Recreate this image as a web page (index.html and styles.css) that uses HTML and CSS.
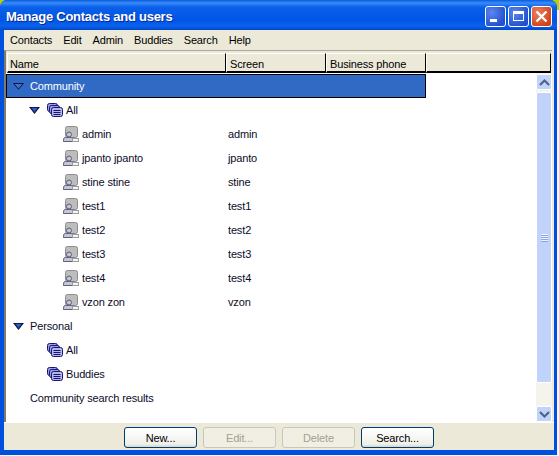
FILE: index.html
```html
<!DOCTYPE html>
<html lang="en">
<head>
<meta charset="UTF-8">
<title>Manage Contacts and users</title>
<link rel="stylesheet" href="styles.css">
</head>
<body>
<svg class="defs" width="0" height="0">
    <symbol id="i-user" viewBox="0 0 16 16">
        <rect x="2.5" y="0.5" width="12" height="11" rx="2" fill="#bdbdbd" stroke="#8c8c8c"/>
        <circle cx="6" cy="8.5" r="2.5" fill="#c6c6cc" stroke="#5a5f85"/>
        <path d="M0.5 15.5v-2q0-2 2-2h6q1.500 0 1.500 1.500v2.500z" fill="#c6c6cc" stroke="#5a5f85"/>
        <rect x="9.500" y="12.500" width="6" height="3" fill="#f6f6f6" stroke="#9a9a9a"/>
    </symbol>
    <symbol id="i-group" viewBox="0 0 16 14">
        <rect x="0.500" y="0.500" width="10" height="8" rx="2" fill="#9a9de0" stroke="#14147a"/>
        <rect x="2.500" y="2.500" width="10" height="8" rx="2" fill="#9a9de0" stroke="#14147a"/>
        <rect x="4.500" y="4.500" width="11" height="9" rx="2" fill="#b4b6e6" stroke="#14147a"/>
        <path d="M6.500 7.500h7M6.500 9.500h7M6.500 11.500h7" stroke="#14147a" fill="none"/>
    </symbol>
    <symbol id="i-open" viewBox="0 0 11 7">
        <path d="M0.700 0.500h9.600L5.500 6.200z" fill="#3f72c8" stroke="#0c1440"/>
    </symbol>
    <symbol id="i-filled" viewBox="0 0 11 7">
        <path d="M0 0h11L5.500 7z" fill="#10184a"/>
        <path d="M2.500 1h6L5.500 5z" fill="#2f5dc0"/>
    </symbol>
</svg>

<div class="window">
    <div class="titlebar">
        <span class="title">Manage Contacts and users</span>
        <div class="caption-btns">
            <div class="cap-btn"><span class="cap-min"></span></div>
            <div class="cap-btn"><span class="cap-max"></span></div>
            <div class="cap-btn cap-close">
                <svg width="19" height="19" viewBox="0 0 19 19"><path d="M4.500 4.500l10 10M14.500 4.500l-10 10" stroke="#fff" stroke-width="2.400" fill="none"/></svg>
            </div>
        </div>
    </div>

    <div class="client">
        <div class="menubar">
            <span>Contacts</span>
            <span>Edit</span>
            <span>Admin</span>
            <span>Buddies</span>
            <span>Search</span>
            <span>Help</span>
        </div>

        <div class="panel">
            <div class="headers">
                <div class="col-head col-name">Name</div>
                <div class="col-head col-screen">Screen</div>
                <div class="col-head col-phone">Business phone</div>
                <div class="col-head col-rest"></div>
            </div>

            <div class="table-body">
                <div class="tree">
                    <div class="row level-0 selected">
                        <svg class="arrow" width="11" height="7"><use href="#i-open"/></svg>
                        <span>Community</span>
                    </div>
                    <div class="row level-1">
                        <svg class="arrow" width="11" height="7"><use href="#i-filled"/></svg>
                        <svg class="group-icon" width="16" height="14"><use href="#i-group"/></svg>
                        <span>All</span>
                    </div>
                    <div class="row user"><svg class="user-icon" width="16" height="16"><use href="#i-user"/></svg><span class="cell-name">admin</span><span>admin</span></div>
                    <div class="row user"><svg class="user-icon" width="16" height="16"><use href="#i-user"/></svg><span class="cell-name">jpanto jpanto</span><span>jpanto</span></div>
                    <div class="row user"><svg class="user-icon" width="16" height="16"><use href="#i-user"/></svg><span class="cell-name">stine stine</span><span>stine</span></div>
                    <div class="row user"><svg class="user-icon" width="16" height="16"><use href="#i-user"/></svg><span class="cell-name">test1</span><span>test1</span></div>
                    <div class="row user"><svg class="user-icon" width="16" height="16"><use href="#i-user"/></svg><span class="cell-name">test2</span><span>test2</span></div>
                    <div class="row user"><svg class="user-icon" width="16" height="16"><use href="#i-user"/></svg><span class="cell-name">test3</span><span>test3</span></div>
                    <div class="row user"><svg class="user-icon" width="16" height="16"><use href="#i-user"/></svg><span class="cell-name">test4</span><span>test4</span></div>
                    <div class="row user"><svg class="user-icon" width="16" height="16"><use href="#i-user"/></svg><span class="cell-name">vzon zon</span><span>vzon</span></div>
                    <div class="row level-0">
                        <svg class="arrow" width="11" height="7"><use href="#i-filled"/></svg>
                        <span>Personal</span>
                    </div>
                    <div class="row level-2">
                        <svg class="group-icon" width="16" height="14"><use href="#i-group"/></svg>
                        <span>All</span>
                    </div>
                    <div class="row level-2">
                        <svg class="group-icon" width="16" height="14"><use href="#i-group"/></svg>
                        <span>Buddies</span>
                    </div>
                    <div class="row no-arrow">Community search results</div>
                </div>

                <div class="scrollbar">
                    <div class="sb-btn">
                        <svg width="11" height="7" viewBox="0 0 11 7"><path d="M1 6l4.500-4.500L10 6" stroke="#4d6185" stroke-width="2" fill="none"/></svg>
                    </div>
                    <div class="sb-thumb"><span class="grip"></span></div>
                    <div class="sb-btn sb-down">
                        <svg width="11" height="7" viewBox="0 0 11 7"><path d="M1 1l4.500 4.500L10 1" stroke="#4d6185" stroke-width="2" fill="none"/></svg>
                    </div>
                </div>
            </div>
        </div>

        <div class="footer">
            <button class="btn">New...</button>
            <button class="btn" disabled>Edit...</button>
            <button class="btn" disabled>Delete</button>
            <button class="btn">Search...</button>
        </div>
    </div>
</div>
</body>
</html>
```
FILE: styles.css
```css
html, body {
    margin: 0;
    padding: 0;
    overflow: hidden;
}
body {
    width: 559px;
    height: 456px;
    background: linear-gradient(#b6d400 10px, #f4f4f4 10px);
    font-family: "Liberation Sans", Arial, sans-serif;
    font-size: 11px;
    letter-spacing: -0.15px;
    color: #000;
}
.defs {
    display: block;
}
.window {
    width: 557px;
    height: 455px;
    display: flex;
    flex-direction: column;
    background-color: #0050e0;
    border-radius: 7px 7px 0 0;
    overflow: hidden;
}
.titlebar {
    height: 30px;
    flex: none;
    display: flex;
    align-items: flex-start;
    justify-content: space-between;
    padding: 6px 5px 0 6px;
    box-sizing: border-box;
    background: linear-gradient(#0a5be0 0, #3a8cf8 3px, #0a60ea 7px, #0055e5 20px, #0a62ee 26px, #0048c8 30px);
}
.title {
    font-size: 13px;
    line-height: 22px;
    font-weight: bold;
    letter-spacing: -0.25px;
    color: #fff;
    text-shadow: 1px 1px 0 #0a2a90;
}
.caption-btns {
    display: flex;
    gap: 2px;
}
.cap-btn {
    width: 21px;
    height: 21px;
    box-sizing: border-box;
    border: 1px solid #fff;
    border-radius: 3px;
    background: radial-gradient(circle at 30% 30%, #5c86f0, #2350d0 75%);
    display: flex;
}
.cap-close {
    background: radial-gradient(circle at 30% 30%, #e8805c, #d2431c 75%);
}
.cap-min {
    width: 7px;
    height: 3px;
    background-color: #fff;
    margin: 12px 0 0 4px;
}
.cap-max {
    width: 11px;
    height: 10px;
    box-sizing: border-box;
    border: 1px solid #fff;
    border-top-width: 3px;
    margin: 4px 0 0 4px;
}
.client {
    flex: 1;
    min-height: 0;
    margin: 0 3px 5px 4px;
    display: flex;
    flex-direction: column;
    background-color: #ece9d8;
}
.menubar {
    height: 20px;
    flex: none;
    display: flex;
    align-items: center;
    gap: 11px;
    padding: 0 0 0 6px;
}
.panel {
    flex: none;
    height: 369px;
    margin-right: 2px;
    border-top: 1px solid #aca899;
    border-left: 2px solid #7e7b6e;
    padding-top: 2px;
    display: flex;
    flex-direction: column;
}
.headers {
    height: 20px;
    flex: none;
    display: flex;
    padding-left: 1px;
}
.col-head {
    box-sizing: border-box;
    height: 20px;
    padding: 3px 0 0 3px;
    border-right: 1px solid #000;
    border-bottom: 2px solid #000;
    border-left: 1px solid #fff;
    border-top: 1px solid #fff;
    background-color: #ece9d8;
    line-height: 15px;
}
.col-name { width: 219px; padding-left: 2px; }
.col-screen { width: 100px; }
.col-phone { width: 100px; }
.col-rest { width: 125px; }
.table-body {
    flex: 1;
    min-height: 0;
    display: flex;
    background-color: #fff;
}
.tree {
    width: 530px;
    flex: none;
    padding-top: 1px;
}
.row {
    height: 24px;
    display: flex;
    align-items: center;
    color: #0c0c2a;
}
.selected {
    width: 420px;
    box-sizing: border-box;
    background-color: #316ac5;
    border: 1px solid #000;
    color: #fff;
}
.level-0 {
    padding-left: 7px;
}
.selected.level-0 {
    padding-left: 6px;
}
.level-1 {
    padding-left: 23px;
}
.level-2 {
    padding-left: 41px;
}
.no-arrow {
    padding-left: 24px;
}
.user {
    padding-left: 57px;
}
.cell-name {
    width: 146px;
    flex: none;
}
.user-icon {
    flex: none;
    margin-right: 3px;
}
.arrow {
    flex: none;
    margin-right: 6px;
}
.level-1 .arrow {
    margin-right: 7px;
}
.group-icon {
    flex: none;
    margin-right: 3px;
}
.scrollbar {
    width: 16px;
    flex: none;
    display: flex;
    flex-direction: column;
    padding-top: 1px;
    background-color: #f4f3ec;
}
.sb-btn {
    height: 16px;
    flex: none;
    box-sizing: border-box;
    border: 1px solid #fff;
    border-radius: 2px;
    background-color: #c1d2fb;
    display: flex;
    align-items: center;
    justify-content: center;
}
.sb-down {
    margin-top: auto;
}
.sb-thumb {
    height: 291px;
    flex: none;
    margin-top: 2px;
    box-sizing: border-box;
    border: 1px solid #fff;
    border-radius: 2px;
    background-color: #c1d2fb;
    display: flex;
    align-items: center;
    justify-content: center;
}
.grip {
    width: 7px;
    height: 8px;
    background: repeating-linear-gradient(#eef3ff 0 1px, #8ca6e2 1px 2px);
}
.footer {
    flex: 1;
    min-height: 0;
    display: flex;
    justify-content: center;
    align-items: flex-start;
    gap: 6px;
    padding-top: 4px;
    border-top: 1px solid #fff;
}
.btn {
    width: 73px;
    height: 21px;
    padding: 0;
    font-family: "Liberation Sans", Arial, sans-serif;
    font-size: 11px;
    letter-spacing: -0.15px;
    color: #000;
    border: 1px solid #003c74;
    border-radius: 3px;
    background: linear-gradient(#fff, #f0f0ea 85%, #d8d4c6);
}
.btn:disabled {
    color: #a1a192;
    border-color: #c9c7ba;
    background: #f1efe4;
}
```
